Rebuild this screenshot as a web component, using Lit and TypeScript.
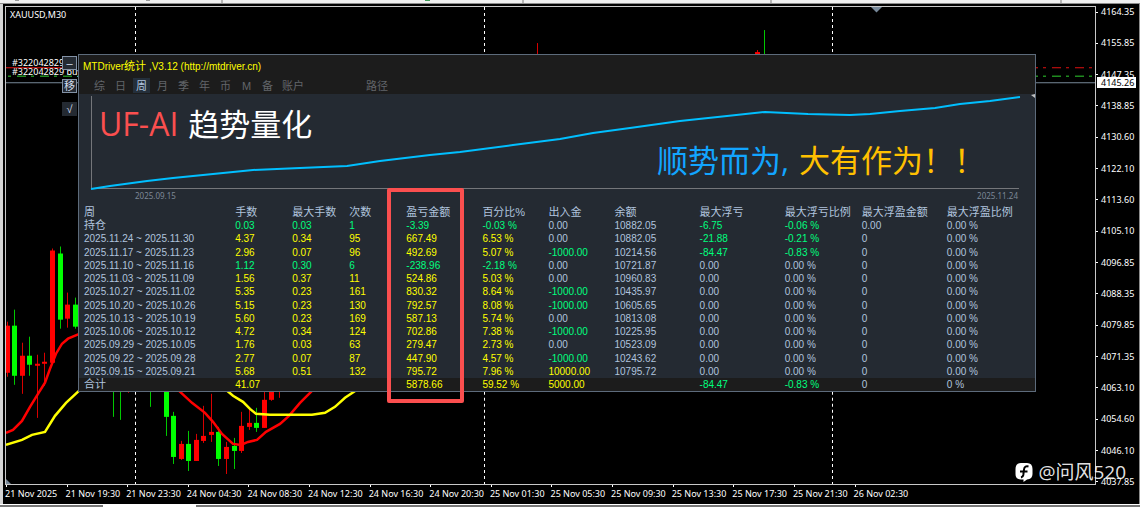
import { LitElement, html, svg, css } from "lit";
import { customElement, state } from "lit/decorators.js";
import { classMap } from "lit/directives/class-map.js";

type Candle = [x: number, high: number, top: number, bottom: number, low: number, kind: "up" | "down"];

const CANDLES: Candle[] = [
  [7, 321, 325, 372, 376, "down"],
  [14, 309, 325, 375, 384, "up"],
  [22, 342, 355, 375, 393, "down"],
  [29, 336, 355, 364, 375, "up"],
  [37, 354, 363, 365, 417, "down"],
  [44, 352, 361, 363, 385, "down"],
  [52, 248, 250, 362, 362, "down"],
  [60, 246, 253, 319, 328, "up"],
  [67, 292, 304, 318, 327, "down"],
  [75, 297, 304, 326, 328, "up"],
  [113, 380, 380, 380, 416, "up"],
  [120, 380, 380, 380, 419, "up"],
  [128, 380, 380, 380, 392, "down"],
  [150, 380, 380, 380, 406, "up"],
  [166, 380, 385, 416, 435, "up"],
  [173, 411, 415, 456, 463, "up"],
  [181, 440, 443, 458, 459, "down"],
  [188, 430, 443, 460, 470, "up"],
  [196, 433, 439, 460, 460, "down"],
  [203, 405, 435, 440, 442, "down"],
  [211, 393, 431, 434, 441, "down"],
  [218, 426, 431, 458, 465, "up"],
  [226, 441, 446, 458, 473, "down"],
  [234, 437, 445, 450, 468, "up"],
  [241, 411, 425, 450, 452, "down"],
  [249, 408, 422, 426, 429, "down"],
  [256, 407, 422, 427, 431, "up"],
  [264, 385, 399, 427, 427, "down"],
  [271, 380, 385, 399, 400, "down"],
  [279, 380, 380, 380, 397, "down"],
  [537, 43, 60, 60, 60, "down"],
  [757, 50, 52, 60, 60, "down"],
  [764, 30, 60, 60, 60, "up"],
];

const FAST_MA = [
  "6,432 13,429 22,420 30,406 38,393 45,382 50,368 56,353 62,343 68,338 80,333",
  "178,389 192,402 205,412 213,421 222,433 233,443 241,444 248,441 257,439 266,431 280,423 289,415 300,402 313,389",
];
const SLOW_MA = [
  "6,444 22,439 32,434 45,431 55,415 66,402 80,389",
  "226,389 233,395 243,401 250,408 256,413 270,414 312,414 325,412 335,406 345,397 357,389",
];
const EQUITY =
  "91,189 110,186 147,181 173,178 213,174 253,170 300,168 347,166 380,161 430,155 460,152 513,145 560,139 593,133 630,128 680,121 727,116 765,112 808,114 850,115 870,114 900,111 935,108 960,104 990,101 1020,97";

const PRICES = [
  "4164.35", "4155.85", "4147.35", "4138.85", "4130.60", "4122.10", "4113.60", "4105.10",
  "4096.85", "4088.35", "4079.85", "4071.35", "4063.10", "4054.60", "4046.10", "4037.85",
];

const TIMES = [
  "21 Nov 2025", "21 Nov 19:30", "21 Nov 23:30", "24 Nov 04:30", "24 Nov 08:30",
  "24 Nov 12:30", "24 Nov 16:30", "24 Nov 20:30", "25 Nov 01:30", "25 Nov 05:30",
  "25 Nov 09:30", "25 Nov 13:30", "25 Nov 17:30", "25 Nov 21:30", "26 Nov 02:30",
];

const TABS = ["综", "日", "周", "月", "季", "年", "币", "M", "备", "账户", "路径"];

const HEAD = ["周", "手数", "最大手数", "次数", "盈亏金额", "百分比%", "出入金", "余额", "最大浮亏", "最大浮亏比例", "最大浮盈金额", "最大浮盈比例"];
const WIDTHS = ["w1", "w2", "w2", "w2", "w3", "w4", "w4", "w5", "w5", "w6", "w5", "w7"];

const ROWS = [
  ["持仓", "0.03", "0.03", "1", "-3.39", "-0.03 %", "0.00", "10882.05", "-6.75", "-0.06 %", "0.00", "0.00 %"],
  ["2025.11.24 ~ 2025.11.30", "4.37", "0.34", "95", "667.49", "6.53 %", "0.00", "10882.05", "-21.88", "-0.21 %", "0", "0.00 %"],
  ["2025.11.17 ~ 2025.11.23", "2.96", "0.07", "96", "492.69", "5.07 %", "-1000.00", "10214.56", "-84.47", "-0.83 %", "0", "0.00 %"],
  ["2025.11.10 ~ 2025.11.16", "1.12", "0.30", "6", "-238.96", "-2.18 %", "0.00", "10721.87", "0.00", "0.00 %", "0", "0.00 %"],
  ["2025.11.03 ~ 2025.11.09", "1.56", "0.37", "11", "524.86", "5.03 %", "0.00", "10960.83", "0.00", "0.00 %", "0", "0.00 %"],
  ["2025.10.27 ~ 2025.11.02", "5.35", "0.23", "161", "830.32", "8.64 %", "-1000.00", "10435.97", "0.00", "0.00 %", "0", "0.00 %"],
  ["2025.10.20 ~ 2025.10.26", "5.15", "0.23", "130", "792.57", "8.08 %", "-1000.00", "10605.65", "0.00", "0.00 %", "0", "0.00 %"],
  ["2025.10.13 ~ 2025.10.19", "5.60", "0.23", "169", "587.13", "5.74 %", "0.00", "10813.08", "0.00", "0.00 %", "0", "0.00 %"],
  ["2025.10.06 ~ 2025.10.12", "4.72", "0.34", "124", "702.86", "7.38 %", "-1000.00", "10225.95", "0.00", "0.00 %", "0", "0.00 %"],
  ["2025.09.29 ~ 2025.10.05", "1.76", "0.03", "63", "279.47", "2.73 %", "0.00", "10523.09", "0.00", "0.00 %", "0", "0.00 %"],
  ["2025.09.22 ~ 2025.09.28", "2.77", "0.07", "87", "447.90", "4.57 %", "-1000.00", "10243.62", "0.00", "0.00 %", "0", "0.00 %"],
  ["2025.09.15 ~ 2025.09.21", "5.68", "0.51", "132", "795.72", "7.96 %", "10000.00", "10795.72", "0.00", "0.00 %", "0", "0.00 %"],
];
const TOTAL = ["合计", "41.07", "", "", "5878.66", "59.52 %", "5000.00", "", "-84.47", "-0.83 %", "0", "0 %"];

/** Colour class of a cell: losses are green, gains yellow, neutral values grey. */
function tone(row: string[], col: number): string {
  const value = row[col];
  if (col === 7) return "flat";
  if (col <= 5) return row[4].startsWith("-") ? "loss" : "gain";
  if (value.startsWith("-")) return "loss";
  return col === 6 && parseFloat(value) > 0 ? "gain" : "flat";
}

@customElement("stats-panel")
export class StatsPanel extends LitElement {
  @state() private period = "周";

  static styles = css`
    :host {
      display: block;
      border: 1px solid #5d6b7b;
      background: #242a32;
      color: #b0c4de;
      font: 10px/13px "Liberation Sans", "Noto Sans CJK SC", sans-serif;
    }
    .bar { background: #1c1c1c; }
    .title {
      margin: 0;
      padding-left: 4px;
      font-size: 10px;
      font-weight: 400;
      line-height: 22px;
      height: 23px;
      color: #ffff00;
    }
    .cjk { font-size: 11px; }
    .tabs { display: flex; padding-left: 10px; height: 16px; }
    .tab {
      box-sizing: border-box;
      min-width: 17px;
      height: 15px;
      margin: 0 2px;
      padding: 0 2px;
      border: 0;
      background: none;
      color: #62656a;
      font: 11px/16px "Liberation Sans", "Noto Sans CJK SC", sans-serif;
      white-space: nowrap;
    }
    .tab.on { background: #242f3b; color: #b0c4de; }
    .tab.path { margin-left: 56px; }
    .chart { position: relative; height: 96px; }
    .chart svg { display: block; width: 100%; height: 100%; }
    .slogan {
      position: absolute;
      display: flex;
      gap: 10px;
      margin: 0;
      font: 31px/44px "Open Sans", "Noto Sans CJK SC", sans-serif;
      white-space: nowrap;
    }
    .brand { left: 20px; top: 8px; }
    .motto { right: 50px; top: 44px; }
    .red { color: #fb4f4f; font-size: 32px; }
    .white { color: #ffffff; }
    .blue { color: #12a5ff; }
    .gold { color: #ffc000; }
    .dates {
      display: flex;
      justify-content: space-between;
      padding: 0 17px 0 56px;
      line-height: 12px;
      height: 14px;
      color: #7d8897;
      font-family: "Noto Sans", sans-serif;
      font-size: 8px;
    }
    table { width: 100%; height: 187px; table-layout: fixed; border-collapse: collapse; }
    th, td { padding: 0 0 0 5px; text-align: left; font-weight: 400; white-space: nowrap; vertical-align: middle; line-height: 13px; }
    thead th { height: 15px; font-size: 11px; vertical-align: bottom; }
    tbody th.cjk, tfoot th { font-size: 11px; }
    tfoot th, tfoot td { height: 13px; background: #1c1c1c; }
    .gain { color: #ffff00; }
    .loss { color: #00ff7f; }
    .flat { color: #b0c4de; }
    .w1 { width: 151px; }
    .w2 { width: 57px; }
    .w3 { width: 76px; }
    .w4 { width: 66px; }
    .w5 { width: 85px; }
    .w6 { width: 77px; }
    .w7 { width: 93px; }
  `;

  private line(row: string[]) {
    return html`<tr>
      ${row.map((v, i) =>
        i === 0
          ? html`<th scope="row" class=${/\d/.test(v) ? "" : "cjk"}>${v}</th>`
          : html`<td class=${tone(row, i)}>${v}</td>`,
      )}
    </tr>`;
  }

  render() {
    return html`
      <header class="bar">
        <h1 class="title">MTDriver<span class="cjk">统计</span> ,V3.12 (http://mtdriver.cn)</h1>
        <nav class="tabs">
          ${TABS.map(
            (t) => html`<button
              class=${classMap({ tab: true, on: t === this.period, path: t === "路径" })}
              @click=${() => (this.period = t)}
            >${t}</button>`,
          )}
        </nav>
      </header>
      <div class="chart">
        <svg viewBox="79 94 956 96" preserveAspectRatio="none" aria-hidden="true">
          <path d="M91.5 96V188.500H1019" fill="none" stroke="#74767a" />
          <polyline points=${EQUITY} fill="none" stroke="#00bfff" stroke-width="2" />
          <path d="M1035 94V98L1031 95Z" fill="#c0c0c0" />
        </svg>
        <p class="slogan brand"><span class="red">UF-AI</span><span class="white">趋势量化</span></p>
        <p class="slogan motto"><span class="blue">顺势而为,</span><span class="gold">大有作为！！</span></p>
      </div>
      <div class="dates"><span>2025.09.15</span><span>2025.11.24</span></div>
      <table>
        <colgroup>${WIDTHS.map((w) => html`<col class=${w} />`)}</colgroup>
        <thead><tr>${HEAD.map((h) => html`<th scope="col">${h}</th>`)}</tr></thead>
        <tbody>${ROWS.map((r) => this.line(r))}</tbody>
        <tfoot>${this.line(TOTAL)}</tfoot>
      </table>
    `;
  }
}

@customElement("app-root")
export class AppRoot extends LitElement {
  static styles = css`
    :host {
      display: flex;
      flex-direction: column;
      min-height: 100vh;
      background: #000;
      color: #fff;
      font: 9px/12px "Noto Sans", "Noto Sans CJK SC", sans-serif;
    }
    .strip { height: 3px; background: #f0f0f0; border-bottom: 1px solid #8c8c8c; }
    .strip svg { display: block; width: 100%; height: 3px; }
    .terminal {
      flex: 1;
      display: grid;
      grid-template-columns: minmax(0, 1fr) 43px;
      grid-template-rows: 1fr 19px;
      padding: 2px 0 0 2px;
      border-left: 3px solid #d4d4d4;
      border-right: 1px solid #8c8c8c;
      background: #000;
    }
    .plot { position: relative; border: 1px solid #c8c8c8; }
    .plot > svg { position: absolute; inset: 0; width: 100%; height: 100%; }
    .symbol { position: absolute; left: 4px; top: 2px; }
    .orders { position: absolute; left: 6px; top: 51px; display: grid; line-height: 9px; white-space: nowrap; }
    .tools { position: absolute; left: 56px; top: 49px; display: grid; gap: 9px; }
    .tool {
      width: 15px;
      height: 14px;
      box-sizing: border-box;
      padding: 0;
      border: 1px solid #8291a5;
      background: #242a32;
      color: #d4dfee;
      font: 11px/12px "Liberation Sans", "Noto Sans CJK SC", sans-serif;
    }
    .tool.plain { border-color: #242a32; }
    stats-panel { position: absolute; left: 72px; right: 59px; top: 47px; }
    .focus { position: absolute; left: 381px; top: 181px; width: 69px; height: 207px; border: 4px solid #fb4f4f; border-radius: 2px; }
    .prices {
      grid-row: 1 / 3;
      grid-column: 2;
      position: relative;
      display: flex;
      flex-direction: column;
      justify-content: space-between;
      padding-bottom: 16px;
    }
    .price { display: flex; align-items: center; gap: 3px; }
    .price::before { content: ""; width: 2px; height: 1px; background: #fff; }
    .last { position: absolute; left: 1px; right: 3px; top: 71px; line-height: 11px; padding-left: 4px; background: #fff; color: #000; }
    .times { display: grid; grid-template-columns: repeat(18, minmax(0, 1fr)); }
    .time { position: relative; white-space: nowrap; padding-top: 3px; }
    .time::before { content: ""; position: absolute; left: 1px; top: 0; width: 1px; height: 2px; background: #fff; }
    .mark {
      position: absolute;
      right: 14px;
      bottom: 20px;
      display: flex;
      align-items: center;
      gap: 5px;
      color: rgba(255, 255, 255, 0.9);
      font: 19px/24px "Open Sans", "Noto Sans CJK SC", sans-serif;
    }
    .mark svg { width: 18px; height: 20px; }
    .foot { height: 2px; border-top: 1px solid #fff; background: #777; padding-left: 103px; }
    .foot span { display: block; width: 93px; height: 2px; background: #fff; }
    .frame { position: relative; display: flex; flex-direction: column; flex: 1; }
  `;

  private candle([x, high, top, bottom, low, kind]: Candle) {
    const up = kind === "up";
    return svg`
      <rect x=${x} y=${high} width="1" height=${low - high} fill=${up ? "#00c800" : "#d80000"} />
      <rect x=${x - 2} y=${top} width="5" height=${bottom - top} fill=${up ? "#00ff00" : "#ff0000"} />`;
  }

  render() {
    return html`
      <div class="frame">
        <div class="strip">
          <svg viewBox="0 0 1140 3" preserveAspectRatio="none" aria-hidden="true">
            <path d="M222 0V3M523 0V3M771 0V3M1061 0V3" stroke="#b5b5b5" stroke-width="2" />
            <path d="M425 0H430" stroke="#3f9a56" stroke-width="2" />
            <path d="M15 0H19M146 0H150" stroke="#999" stroke-width="2" />
          </svg>
        </div>
        <main class="terminal">
          <section class="plot">
            <svg viewBox="6 7 1089 476" preserveAspectRatio="none" aria-hidden="true">
              <path d="M135.500 7V484M484.500 7V484M832.500 7V484" stroke="#fff" stroke-dasharray="3 3" />
              <path d="M6 67.500H62" stroke="#e01010" />
              <path d="M1036 67.500H1092" stroke="#e01010" stroke-dasharray="9 5 3 6" stroke-dashoffset="7" />
              <path d="M6 76H1092" stroke="#1f8a1f" stroke-dasharray="9 5 3 6" stroke-dashoffset="12" stroke-width="1.500" />
              <path d="M6 82.500H1096" stroke="#778899" />
              ${CANDLES.map((c) => this.candle(c))}
              ${FAST_MA.map((p) => svg`<polyline points=${p} fill="none" stroke="#ff0000" stroke-width="2.500" />`)}
              ${SLOW_MA.map((p) => svg`<polyline points=${p} fill="none" stroke="#ffff00" stroke-width="2.500" />`)}
              <path d="M871 7H882L876.500 12.500Z" fill="#778899" />
              <path d="M6 478V484H12Z" fill="#778899" />
            </svg>
            <span class="symbol">XAUUSD,M30</span>
            <div class="orders"><span>#322042829</span><span>#322042829 buy</span></div>
            <div class="tools">
              <button class="tool">–</button>
              <button class="tool">移</button>
              <button class="tool plain">√</button>
            </div>
            <stats-panel></stats-panel>
            <div class="focus"></div>
          </section>
          <aside class="prices">
            ${PRICES.map((p) => html`<span class="price">${p}</span>`)}
            <span class="last">4145.26</span>
          </aside>
          <footer class="times">${TIMES.map((t) => html`<span class="time">${t}</span>`)}</footer>
        </main>
        <div class="mark">
          <svg viewBox="0 0 18 20" aria-hidden="true">
            <path d="M6 1H12Q17.500 1 17.500 7V12Q17.500 17 12 17.500L8.500 20V17.500H6Q.5 17.500 .5 12V7Q.5 1 6 1Z" fill="#fff" />
            <path d="M13.500 4.500Q9.500 3.500 9 7.500L8.300 13Q8 15 6 15.500M5 9.500H12.500" fill="none" stroke="#000" stroke-width="2" />
          </svg>
          <span>@问风520</span>
        </div>
      </div>
      <div class="foot"><span></span></div>
    `;
  }
}
